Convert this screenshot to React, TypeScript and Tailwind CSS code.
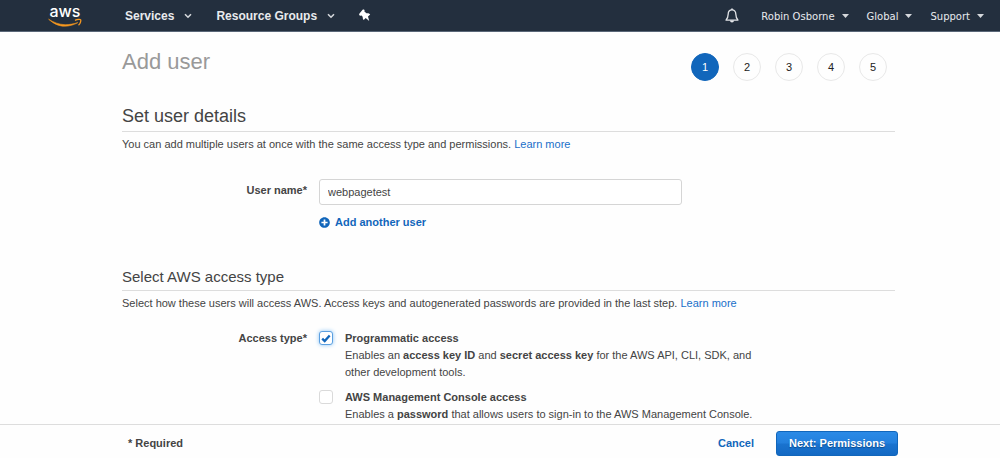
import { useState } from "react";
import type { ReactNode } from "react";
import { FaPlusCircle } from "react-icons/fa";

const steps = [1, 2, 3, 4, 5];
const accountMenus = ["Robin Osborne", "Global", "Support"];

function AwsLogo() {
  return (
    <svg width="36" height="30" viewBox="0 0 36 30" role="img" aria-label="AWS">
      <text
        x="17"
        y="16"
        textAnchor="middle"
        fill="#fff"
        className="font-['Inter',sans-serif] text-[16px] font-medium"
      >
        aws
      </text>
      <path
        d="M.6 18.200C5.500 22.600 10.500 25.200 16.500 25.200c4.600 0 9.400-1.200 13.300-3.600-4.300 1.400-8.700 2.200-12.700 2.100C11 23.500 5.800 21.500.6 18.200z"
        fill="#f7981f"
        stroke="#f7981f"
        strokeWidth=".6"
        strokeLinejoin="round"
      />
      <path
        d="M27.500 19.200c1.900-.9 4.800-1 5.200-.4.4.8-.3 3.600-1.800 5"
        fill="none"
        stroke="#f7981f"
        strokeWidth="1.300"
        strokeLinecap="round"
      />
    </svg>
  );
}

function Chevron() {
  return (
    <svg width="8" height="6" viewBox="0 0 8 6" aria-hidden="true">
      <path d="M1 1.200l3 3 3-3" fill="none" stroke="#d5d8dc" strokeWidth="1.600" />
    </svg>
  );
}

function Caret() {
  return (
    <svg width="7" height="4" viewBox="0 0 7 4" aria-hidden="true">
      <path d="M0 0h7L3.500 4z" fill="#d5d8dc" />
    </svg>
  );
}

function Pin() {
  return (
    <svg width="12" height="13" viewBox="0 0 12 13" aria-hidden="true">
      <path
        d="M3.600.8c.8-.7 2-.2 2 .8l-.2 1 2.100 1.700c1.400-.3 2.900.1 3.700 1.200L9 7.500l1.200 4.600-3.500-3-2 2c-.8-.8-1.200-1.900-.9-3L2.600 6.500l-1.400.2C.1 6.500-.2 5.300.5 4.500z"
        fill="#fff"
      />
    </svg>
  );
}

function Bell() {
  return (
    <svg width="14" height="16" viewBox="0 0 14 16" aria-hidden="true">
      <path
        d="M7 1.900c-2.500 0-3.800 1.800-3.800 4.200 0 3-.7 4.400-2.200 6h12c-1.500-1.600-2.200-3-2.200-6C10.800 3.700 9.500 1.900 7 1.900z"
        fill="none"
        stroke="#e4e6e9"
        strokeWidth="1.300"
        strokeLinejoin="round"
      />
      <path d="M7 .6v1.400" stroke="#e4e6e9" strokeWidth="1.600" />
      <path d="M5 12.500h4c0 1.300-.9 2-2 2s-2-.7-2-2z" fill="#e4e6e9" />
    </svg>
  );
}

interface accessOptionProps {
  id: string;
  title: string;
  checked: boolean;
  onChange: (checked: boolean) => void;
  children: ReactNode;
}

function AccessOption({ id, title, checked, onChange, children }: accessOptionProps) {
  return (
    <div className="flex gap-3">
      <div className="grid h-4 w-[14px] shrink-0 place-items-center">
        <input
          id={id}
          type="checkbox"
          checked={checked}
          onChange={(e) => onChange(e.target.checked)}
          className="col-start-1 row-start-1 size-[14px] appearance-none rounded-[3px] border border-[#dadada] bg-white checked:border-[#5b9fe0] checked:shadow-[0_0_4px_#8cc4f5]"
        />
        {checked && (
          <svg
            width="10"
            height="9"
            viewBox="0 0 10 9"
            aria-hidden="true"
            className="pointer-events-none col-start-1 row-start-1"
          >
            <path d="M1.200 4.600l2.500 2.500L8.700 1.500" fill="none" stroke="#1166bb" strokeWidth="2.300" />
          </svg>
        )}
      </div>
      <div>
        <label htmlFor={id} className="block font-bold">
          {title}
        </label>
        <p>{children}</p>
      </div>
    </div>
  );
}

export default function App() {
  const [userName, setUserName] = useState<string>("webpagetest");
  const [programmatic, setProgrammatic] = useState<boolean>(true);
  const [management, setManagement] = useState<boolean>(false);

  return (
    <div className="flex min-h-screen flex-col bg-[#fefefe] font-['Liberation_Sans',Arial,sans-serif] text-[11px] leading-[17px] text-[#444]">
      <header className="flex h-8 items-center justify-between border-b border-[#5a6778] bg-[#232f3e] pr-4 pl-12 text-[#e8eaed]">
        <nav className="flex items-center text-xs font-bold">
          <a href="#home" className="mr-[41px]">
            <AwsLogo />
          </a>
          <button className="mr-6 flex items-center gap-[10px]">
            Services <Chevron />
          </button>
          <button className="mr-6 flex items-center gap-[10px]">
            Resource Groups <Chevron />
          </button>
          <button aria-label="Pin shortcuts">
            <Pin />
          </button>
        </nav>
        <div className="flex items-center gap-[18px] pt-px font-['DejaVu_Sans',sans-serif] text-[10px]">
          <button aria-label="Notifications" className="mr-1">
            <Bell />
          </button>
          {accountMenus.map((menu) => (
            <button key={menu} className="flex items-center gap-[7px]">
              {menu} <Caret />
            </button>
          ))}
        </div>
      </header>

      <main className="flex-1 pr-[105px] pl-[122px]">
        <div className="flex items-start justify-between pt-4 pr-2">
          <h1 className="text-[22px] leading-7 text-[#999]">Add user</h1>
          <ol className="flex gap-[14px] pt-[5px]">
            {steps.map((step) => (
              <li
                key={step}
                aria-current={step === 1 ? "step" : undefined}
                className={`flex size-7 items-center justify-center rounded-full border ${
                  step === 1 ? "border-[#1166bb] bg-[#1166bb] text-white" : "border-[#e8e8e8] text-[#222]"
                }`}
              >
                {step}
              </li>
            ))}
          </ol>
        </div>

        <section>
          <h2 className="mt-[23px] border-b border-[#ddd] pb-[3px] text-lg leading-6">Set user details</h2>
          <p className="mt-1">
            You can add multiple users at once with the same access type and permissions.{" "}
            <a href="#users" className="text-[#1a6fc9]">
              Learn more
            </a>
          </p>
          <div className="mt-[26px] flex gap-3">
            <label htmlFor="user-name" className="w-[185px] pt-[3px] text-right font-bold">
              User name*
            </label>
            <div className="w-[363px]">
              <input
                id="user-name"
                type="text"
                value={userName}
                onChange={(e) => setUserName(e.target.value)}
                className="h-[26px] w-full rounded-[3px] border border-[#d5d5d5] bg-white px-2"
              />
              <button className="mt-[9px] flex items-center gap-[5px] font-bold text-[#1166bb]">
                <FaPlusCircle size={11} aria-hidden="true" />
                Add another user
              </button>
            </div>
          </div>
        </section>

        <section>
          <h2 className="mt-9 border-b border-[#ddd] pb-[3px] text-[15px] leading-5">Select AWS access type</h2>
          <p className="mt-1">
            Select how these users will access AWS. Access keys and autogenerated passwords are provided in the last
            step.{" "}
            <a href="#access" className="text-[#1a6fc9]">
              Learn more
            </a>
          </p>
          <fieldset className="mt-[18px] flex gap-3">
            <legend className="float-left w-[185px] text-right font-bold">Access type*</legend>
            <div className="flex w-[450px] flex-col gap-2">
              <AccessOption
                id="programmatic"
                title="Programmatic access"
                checked={programmatic}
                onChange={setProgrammatic}
              >
                Enables an <b>access key ID</b> and <b>secret access key</b> for the AWS API, CLI, SDK, and other
                development tools.
              </AccessOption>
              <AccessOption
                id="management"
                title="AWS Management Console access"
                checked={management}
                onChange={setManagement}
              >
                Enables a <b>password</b> that allows users to sign-in to the AWS Management Console.
              </AccessOption>
            </div>
          </fieldset>
        </section>
      </main>

      <footer className="sticky bottom-0 flex items-center justify-between border-t border-[#ddd] bg-[#fefefe] pt-[6px] pr-[102px] pb-[2px] pl-32 font-bold">
        <span>* Required</span>
        <div className="flex items-center gap-[22px]">
          <button className="text-[#1166bb]">Cancel</button>
          <button className="h-[25px] rounded-[3px] border border-[#1166bb] bg-[linear-gradient(#2b8ae6,#2380dd_48%,#1a73cf_52%,#1369c3)] px-3 text-white text-shadow-[0_1px_1px_#0b4a8c]">
            Next: Permissions
          </button>
        </div>
      </footer>
    </div>
  );
}
